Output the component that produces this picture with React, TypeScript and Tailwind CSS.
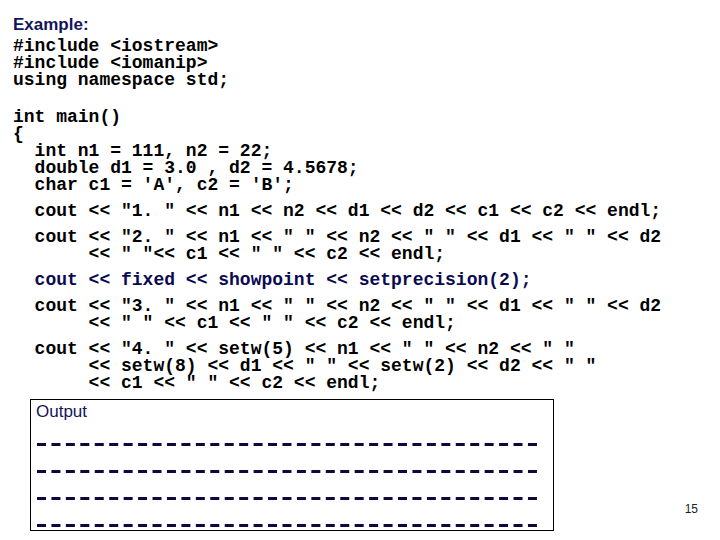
import React from 'react';

type Para = { lines: string[]; navy?: boolean; gap?: string };

const paras: Para[] = [
  { lines: ['#include <iostream>', '#include <iomanip>', 'using namespace std;'] },
  { lines: ['int main()', '{', '  int n1 = 111, n2 = 22;', '  double d1 = 3.0 , d2 = 4.5678;', "  char c1 = 'A', c2 = 'B';"], gap: 'mt-[19.7px]' },
  { lines: ['  cout << "1. " << n1 << n2 << d1 << d2 << c1 << c2 << endl;'] },
  { lines: ['  cout << "2. " << n1 << " " << n2 << " " << d1 << " " << d2', '       << " "<< c1 << " " << c2 << endl;'] },
  { lines: ['  cout << fixed << showpoint << setprecision(2);'], navy: true },
  { lines: ['  cout << "3. " << n1 << " " << n2 << " " << d1 << " " << d2', '       << " " << c1 << " " << c2 << endl;'] },
  {
    lines: [
      '  cout << "4. " << setw(5) << n1 << " " << n2 << " "',
      '       << setw(8) << d1 << " " << setw(2) << d2 << " "',
      '       << c1 << " " << c2 << endl;',
    ],
  },
];

const DashRow = () => (
  <svg width="500" height="3" className="block">
    <line x1="0" y1="1.5" x2="500" y2="1.5" stroke="#0a0a40" strokeWidth="3" strokeDasharray="9 5.44" />
  </svg>
);

export default function App() {
  return (
    <div className="w-[720px] h-[540px] bg-white overflow-hidden pl-[13px] pt-[15px]">
      <div className="font-['Liberation_Sans',Arial,sans-serif] font-bold text-[17px] leading-[19px] text-[#14145a]">
        Example:
      </div>
      <div className="mt-[4px] font-['Liberation_Mono','Courier_New',monospace] font-bold text-[18px] leading-[17px] whitespace-pre">
        {paras.map((p, i) => (
          <div key={i} className={i === 0 ? '' : p.gap ?? 'mt-[9px]'}>
            {p.lines.map((l, j) => (
              <div key={j} className={p.navy ? 'text-[#0a0a50]' : 'text-black'}>
                {l}
              </div>
            ))}
          </div>
        ))}
      </div>
      <div className="mt-[7px] flex items-end justify-between pr-[22px]">
        <div className="ml-[17px] w-[524px] h-[132px] border border-black pl-[5px] pt-[2px]">
          <div className="font-['Liberation_Sans',Arial,sans-serif] text-[17px] leading-[19px] text-[#14145a]">Output</div>
          <div className="mt-[22px] flex flex-col gap-[24px] pl-[1px]">
            <DashRow />
            <DashRow />
            <DashRow />
            <DashRow />
          </div>
        </div>
        <div className="mb-[15px] font-['Liberation_Sans',Arial,sans-serif] text-[12px] leading-[14px] text-[#222]">15</div>
      </div>
    </div>
  );
}
